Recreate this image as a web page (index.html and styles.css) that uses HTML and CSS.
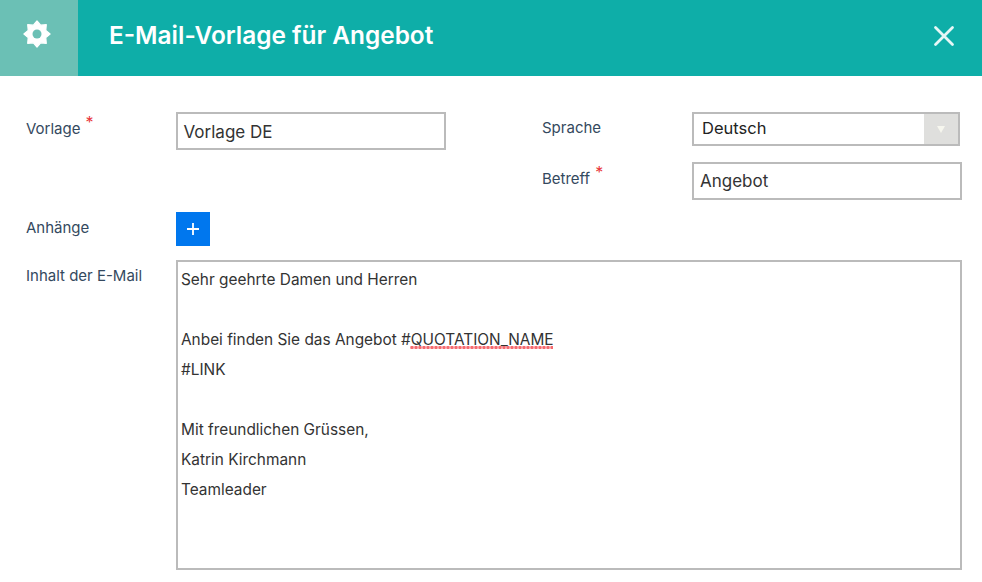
FILE: index.html
```html
<!DOCTYPE html>
<html lang="de">
<head>
<meta charset="utf-8">
<title>E-Mail-Vorlage für Angebot</title>
<link rel="stylesheet" href="styles.css">
</head>
<body>
<header class="header">
  <div class="header-icon">
    <svg class="gear" viewBox="0 0 28 28" width="28" height="28" aria-hidden="true"><path fill="#fff" stroke="#fff" stroke-width="1.200" stroke-linejoin="round" d="M14 .9L17.640 5.220 23.300 4.700 22.780 10.360 27.100 14 22.780 17.640 23.300 23.300 17.640 22.780 14 27.100 10.360 22.780 4.700 23.300 5.220 17.640 .9 14 5.220 10.360 4.700 4.700 10.360 5.220z"/><circle cx="14" cy="14" r="4.500" fill="#6bc0b5"/></svg>
  </div>
  <h1 class="title">E-Mail-Vorlage für Angebot</h1>
  <svg class="close" viewBox="0 0 22 22" width="22" height="22" aria-hidden="true"><path d="M2.500 2.500l17 17M19.500 2.500l-17 17" stroke="#e6f7f6" stroke-width="2.800" stroke-linecap="round" fill="none"/></svg>
</header>
<main class="form">
  <div class="top">
    <div class="col-left">
      <div class="field">
        <span class="label">Vorlage<sup class="req">*</sup></span>
        <div class="input input-name">Vorlage DE</div>
      </div>
    </div>
    <div class="col-right">
      <div class="field field-lang">
        <span class="label label-plain">Sprache</span>
        <div class="select"><span class="select-value">Deutsch</span><span class="select-arrow"><i class="tri"></i></span></div>
      </div>
      <div class="field">
        <span class="label">Betreff<sup class="req">*</sup></span>
        <div class="input input-subject">Angebot</div>
      </div>
    </div>
  </div>
  <div class="field field-att">
    <span class="label label-att">Anhänge</span>
    <button class="add" type="button"><svg viewBox="0 0 12 12" width="12" height="12" aria-hidden="true"><path d="M6 0v12M0 6h12" stroke="#fff" stroke-width="1.800" fill="none"/></svg></button>
  </div>
  <div class="field">
    <span class="label label-body">Inhalt der E-Mail</span>
    <div class="editor">
      <p>Sehr geehrte Damen und Herren</p>
      <p>&nbsp;</p>
      <p>Anbei finden Sie das Angebot #<span class="spell">QUOTATION_NAME</span></p>
      <p>#LINK</p>
      <p>&nbsp;</p>
      <p>Mit freundlichen Grüssen,</p>
      <p>Katrin Kirchmann</p>
      <p>Teamleader</p>
    </div>
  </div>
</main>
</body>
</html>
```
FILE: styles.css
```css
* { box-sizing: border-box; }
html, body { margin: 0; padding: 0; background: #fff; }
body { width: 982px; height: 582px; overflow: hidden; font-family: "Inter", "Liberation Sans", sans-serif; color: #333; }
.header { height: 76px; background: #0eaea8; display: flex; align-items: stretch; color: #fff; }
.header-icon { width: 78px; background: #6bc0b5; display: flex; justify-content: center; padding-top: 20px; padding-right: 4px; }
.gear { display: block; }
.title { margin: 0 0 0 31px; flex: 1; font-size: 24.400px; font-weight: 600; line-height: 71px; }
.close { margin: 25px 27px 0 0; }
.form { padding: 36px 20px 0 26px; }
.top { display: flex; }
.col-left { width: 516px; }
.col-right { flex: 1; }
.field { display: flex; align-items: flex-start; }
.field-lang { margin-bottom: 16px; }
.field-att { margin-top: 12px; margin-bottom: 14px; }
.label { width: 150px; flex: none; font-size: 15px; line-height: 20px; color: #34495e; padding-top: 7px; }
.label-plain { padding-top: 6px; }
.label-att { padding-top: 6px; }
.label-body { padding-top: 6px; }
.req { color: #e8353a; font-size: 16px; line-height: 0; margin-left: 5px; }
.input { border: 2px solid #bbb; font-size: 17px; display: flex; align-items: center; color: #333; background: #fff; }
.input-name { width: 270px; height: 38px; padding: 1px 0 0 5.500px; }
.input-subject { width: 270px; height: 38px; padding-left: 6px; }
.select { width: 268px; height: 34px; border: 2px solid #bbb; display: flex; font-size: 16.500px; color: #222; }
.select-value { flex: 1; padding-left: 8px; line-height: 29px; }
.select-arrow { width: 34px; background: #dfdfdd; display: flex; align-items: center; justify-content: center; }
.tri { width: 0; height: 0; border-left: 4px solid transparent; border-right: 4px solid transparent; border-top: 7px solid #f6f6ee; }
.add { width: 34px; height: 34px; border: 0; padding: 0 1px 1px 0; background: #0077ee; display: flex; align-items: center; justify-content: center; }
.editor { width: 786px; height: 310px; border: 2px solid #bbb; padding: 3px 3px; font-size: 15.400px; line-height: 30px; color: #333; }
.editor p { margin: 0; }
.spell { position: relative; }
.spell::after { content: ""; position: absolute; left: -1px; right: 1px; top: 16px; height: 3px; background: radial-gradient(circle at center, #f66b70 1.300px, rgba(246,107,112,.55) 1.600px, rgba(246,107,112,.35) 100%) 0 0 / 4px 3px repeat-x; }
```
